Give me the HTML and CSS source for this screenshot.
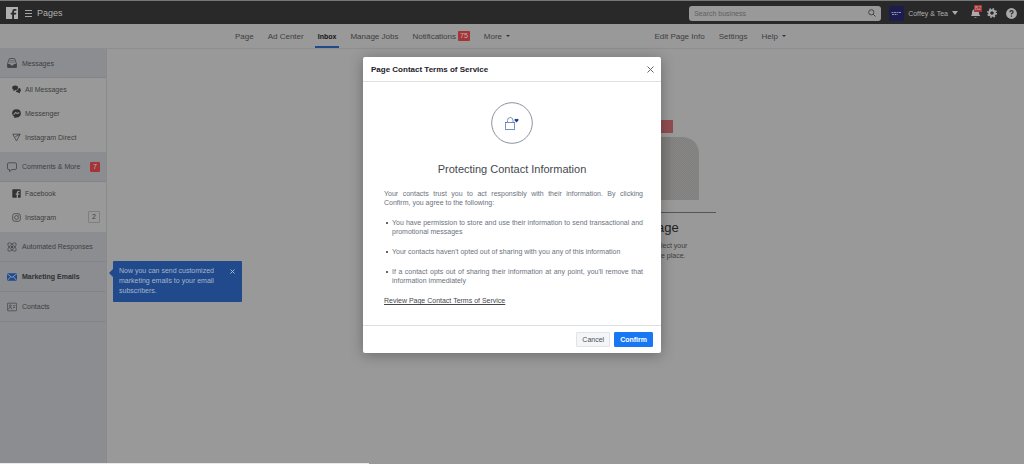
FILE: index.html
```html
<!DOCTYPE html>
<html lang="en">
<head>
<meta charset="utf-8">
<meta name="viewport" content="width=device-width, initial-scale=1">
<title>Pages</title>
<link rel="stylesheet" href="styles.css">
</head>
<body>
<div class="app">
  <header class="topbar">
    <svg class="logo" viewBox="0 0 12 12"><rect width="12" height="12" fill="#b0b0b0"/><path d="M8 12V7.500h2L10.300 5.800H8V4.600Q8 3.700 9 3.700H10.400V2H8.700Q6.200 2 6.200 4.400V5.800H4.700V7.500H6.200V12Z" fill="#282828"/></svg>
    <button class="bare menu-btn" aria-label="Menu"><svg width="7" height="8" viewBox="0 0 7 8"><path d="M0 1.500h7M0 4.500h7M0 7.500h7" stroke="#a5a5a5"/></svg></button>
    <span class="brand">Pages</span>
    <form class="search">
      <input class="search-input" type="text" placeholder="Search business" aria-label="Search business">
      <svg width="8" height="8" viewBox="0 0 8 8" fill="none" stroke="#444"><circle cx="3.300" cy="3.300" r="2.600"/><path d="M5.200 5.200 7.500 7.500"/></svg>
    </form>
    <button class="bare account">
      <svg width="15" height="15" viewBox="0 0 15 15"><rect width="15" height="15" fill="#1d1c4e"/><path d="M2.500 6.500H12.500M3 8.500H8.500" stroke="#9290ad" stroke-dasharray="2 .5"/></svg>
      <span>Coffey &amp; Tea</span>
      <svg width="6" height="4" viewBox="0 0 6 4"><path d="M0 0H6L3 4Z" fill="#aaa"/></svg>
    </button>
    <button class="bare bell" aria-label="Alerts">
      <svg width="11" height="10" viewBox="0 0 11 10"><path d="M1 8Q2 7 2 5Q2 1 5.500 1Q9 1 9 5Q9 7 10.500 8ZM4 9H7Q5.500 10.500 4 9Z" fill="#aaa"/></svg>
      <span class="bell-count">82</span>
    </button>
    <button class="bare" aria-label="Options"><svg width="10" height="10" viewBox="0 0 10 10" fill="none" stroke="#aaa"><circle cx="5" cy="5" r="2.800" stroke-width="2"/><circle cx="5" cy="5" r="4.200" stroke-width="1.600" stroke-dasharray="1.650 1.650"/></svg></button>
    <button class="bare help-btn" aria-label="Help"><svg width="11" height="11" viewBox="0 0 11 11"><circle cx="5.500" cy="5.500" r="5.400" fill="#aaa"/><path d="M3.900 4.300Q3.900 2.700 5.500 2.700Q7.100 2.700 7.100 4.100Q7.100 5 5.500 5.800V6.600M5.500 7.500V8.800" fill="none" stroke="#292929" stroke-width="1.200"/></svg></button>
  </header>

  <nav class="tabs">
    <a class="tab" href="#">Page</a>
    <a class="tab" href="#">Ad Center</a>
    <a class="tab active" href="#">Inbox</a>
    <a class="tab" href="#">Manage Jobs</a>
    <a class="tab" href="#">Notifications <span class="badge">75</span></a>
    <a class="tab" href="#">More <i class="caret"></i></a>
    <span class="spacer"></span>
    <a class="tab" href="#">Edit Page Info</a>
    <a class="tab" href="#">Settings</a>
    <a class="tab" href="#">Help <i class="caret"></i></a>
  </nav>

  <div class="body">
    <aside class="sidebar">
      <a class="group" href="#"><svg class="ico" viewBox="0 0 10 10"><path d="M.5 6 2 1.500Q2.200.5 3 .5H7Q7.800.5 8 1.500L9.500 6V9Q9.500 9.500 9 9.500H1Q.5 9.500.5 9Z" fill="none" stroke="#414345" stroke-width=".8"/><path d="M.5 6H3Q3.300 7.500 5 7.500Q6.700 7.500 7 6H9.500V9.500H.5Z" fill="#414345"/><path d="M2.500 2.500H7.500M2.200 4.200H7.800" stroke="#5b5d5f" stroke-width=".6"/></svg>Messages</a>
      <div class="sub">
        <a class="item" href="#"><svg class="ico-s" viewBox="0 0 9 9" fill="#303234"><path d="M3.200.5Q6 .5 6 2.700Q6 5 3.300 5L1.500 6.200V4.800Q.2 4.200.2 2.800Q.2.500 3.200.5Z"/><path d="M6.600 2.800Q8.900 3.200 8.900 5.200Q8.900 6.400 7.900 7V8.600L6.300 7.400Q4 7.500 3.500 5.700Q6.800 5.500 6.600 2.800Z"/></svg>All Messages</a>
        <a class="item" href="#"><svg class="ico-s" viewBox="0 0 9 9"><path d="M4.500.2Q8.900.4 8.900 4.300Q8.800 8.400 4.500 8.500L2.200 9V7.600Q.1 6.500.1 4.300Q.2.400 4.500.2Z" fill="#303234"/><path d="M1.700 5.600 3.700 3.400 5.300 4.700 7.300 3.500" fill="none" stroke="#999" stroke-width="1.100"/></svg>Messenger</a>
        <a class="item" href="#"><svg class="ico-s" viewBox="0 0 9 9" fill="none" stroke="#414345" stroke-width=".8"><path d="M.8 1.200H8.200L4.500 8ZM3.300 3.700 8.200 1.200"/></svg>Instagram Direct</a>
      </div>
      <a class="group" href="#"><svg class="ico" viewBox="0 0 10 10" fill="none" stroke="#414345" stroke-width=".8"><path d="M1.800.8H8.200Q9.500.8 9.500 2V6.300Q9.500 7.500 8.200 7.500H5L2.500 9.500V7.500H1.800Q.5 7.500.5 6.300V2Q.5.800 1.800.8Z"/></svg>Comments &amp; More<span class="badge end">7</span></a>
      <div class="sub">
        <a class="item" href="#"><svg class="ico-s" viewBox="0 0 9 9"><rect x=".3" y=".3" width="8.400" height="8.400" rx=".6" fill="#303234"/><path d="M6 9V5.800H7.400V4.500H6V3.600Q6 2.900 7.500 3V1.700Q4.700 1.300 4.700 3.600V4.500H3.700V5.800H4.700V9Z" fill="#999"/></svg>Facebook</a>
        <a class="item" href="#"><svg class="ico-s" viewBox="0 0 9 9" fill="none" stroke="#414345" stroke-width=".8"><rect x=".7" y=".7" width="7.600" height="7.600" rx="2"/><circle cx="4.500" cy="4.500" r="1.900"/><path d="M6.300 2.300H7"/></svg>Instagram<span class="count">2</span></a>
      </div>
      <a class="group" href="#"><svg class="ico" viewBox="0 0 10 10" fill="none" stroke="#414345" stroke-width=".7"><ellipse cx="5" cy="5" rx="5.400" ry="2.300" transform="rotate(45 5 5)"/><ellipse cx="5" cy="5" rx="5.400" ry="2.300" transform="rotate(-45 5 5)"/><circle cx="5" cy="5" r="1" fill="#414345"/></svg>Automated Responses</a>
      <a class="group strong" href="#"><svg class="ico" viewBox="0 0 10 10"><rect y="1.200" width="10" height="7.600" rx="1" fill="#204a8c"/><path d="M.3 1.900 5 5.500 9.700 1.900M.5 8.300 3.500 4.800M9.500 8.300 6.500 4.800" fill="none" stroke="#a4acb8" stroke-width=".8"/></svg>Marketing Emails</a>
      <a class="group" href="#"><svg class="ico" viewBox="0 0 10 10" fill="none" stroke="#414345" stroke-width=".7"><rect x=".4" y="1.200" width="9.200" height="7.600" rx=".7"/><circle cx="3.300" cy="3.800" r="1"/><path d="M1.500 7.300Q1.700 5.500 3.300 5.500Q4.900 5.500 5.100 7.300M6 3.700H8.500M6 5.500H8"/></svg>Contacts</a>
      <div class="tip" role="status">
        <p class="tip-text">Now you can send customized marketing emails to your email subscribers.</p>
        <button class="bare tip-close" aria-label="Dismiss"><svg width="5" height="5" viewBox="0 0 5 5"><path d="M.5.500 4.500 4.500M4.500.500.5 4.500" stroke="#a9b5ca"/></svg></button>
      </div>
    </aside>
    <main class="content">
      <div class="empty">
        <svg class="art" viewBox="0 0 76 94"><defs><pattern id="dots" width="2" height="2" patternUnits="userSpaceOnUse"><rect width="1" height="1" fill="#888"/><rect x="1" y="1" width="1" height="1" fill="#888"/></pattern></defs><rect x="0" y="0" width="33" height="13" fill="#904d50"/><path d="M0 17H40Q59 17 59 36V80H0Z" fill="#7f7e7d"/><path d="M30 17H40Q59 17 59 36V80H30Z" fill="url(#dots)"/><path d="M0 92.500H76" stroke="#555"/></svg>
        <h2 class="empty-title">age</h2>
        <p class="empty-text">lect your<br>e place.</p>
      </div>
    </main>
  </div>
  <div class="status"></div>
</div>

<div class="layer">
  <section class="modal" role="dialog" aria-labelledby="dlg-title">
    <header class="modal-head">
      <h1 class="modal-title" id="dlg-title">Page Contact Terms of Service</h1>
      <button class="bare" aria-label="Close"><svg width="7" height="7" viewBox="0 0 7 7"><path d="M.5.500 6.500 6.500M6.500.500.5 6.500" stroke="#606468"/></svg></button>
    </header>
    <div class="modal-body">
      <svg class="lock" viewBox="0 0 42 42" fill="none"><circle cx="21" cy="21" r="20.300" stroke="#8d939f"/><rect x="14.500" y="20.500" width="9" height="7" rx="1" stroke="#8090ab"/><path d="M16.500 20V18.500Q16.500 15.500 19.300 15.500Q22 15.500 22 18.500V20" stroke="#8090ab"/><path d="M14 20.500H16M22 20.500H24M14 27.500H15.500M22.500 27.500H24" stroke="#378af5"/><path d="M25.500 20.600 23.600 18.500Q23.100 16.800 24.500 16.700Q25.300 16.700 25.500 17.300Q25.800 16.700 26.600 16.700Q28 16.900 27.400 18.500Z" fill="#1c3f91"/></svg>
      <h2 class="modal-heading">Protecting Contact Information</h2>
      <div class="terms">
        <p>Your contacts trust you to act responsibly with their information. By clicking Confirm, you agree to the following:</p>
        <ul class="rules">
          <li>You have permission to store and use their information to send transactional and promotional messages</li>
          <li>Your contacts haven't opted out of sharing with you any of this information</li>
          <li>If a contact opts out of sharing their information at any point, you'll remove that information immediately</li>
        </ul>
        <a class="review" href="#">Review Page Contact Terms of Service</a>
      </div>
    </div>
    <footer class="modal-foot">
      <button class="btn">Cancel</button>
      <button class="btn primary">Confirm</button>
    </footer>
  </section>
</div>
</body>
</html>
```
FILE: styles.css
```css
* { box-sizing: border-box; }
body { margin: 0; font: 7px/9px "Liberation Sans", Arial, sans-serif; color: #3c3e40; background: #999; }
h1, h2, p, ul { margin: 0; padding: 0; }
a { color: inherit; text-decoration: none; }
svg { display: block; flex: none; }
button, input { font: inherit; color: inherit; }
.bare { border: 0; padding: 0; background: none; display: flex; align-items: center; }

.app { display: flex; flex-direction: column; min-height: 100vh; }
.topbar { display: flex; align-items: center; height: 24px; padding: 1px 7px 0 6px; background: #292929; border-top: 1px solid #777; color: #b0b0b0; }
.logo { width: 12px; height: 12px; }
.menu-btn { margin-left: 7px; }
.brand { margin: 0 auto 0 5px; font-size: 9px; }
.search { display: flex; align-items: center; width: 192px; height: 15px; margin-right: 8px; padding: 0 5px; background: #999; border-radius: 3px; }
.search-input { flex: 1; min-width: 0; border: 0; padding: 0; background: none; outline: 0; }
.search-input::placeholder { color: #606060; opacity: 1; }
.account { gap: 4px; margin-right: 12px; }
.bell { position: relative; margin-right: 6px; }
.bell-count { position: absolute; top: -3px; left: 4px; width: 8px; background: #a33539; color: #c4a0a0; font-size: 6px; line-height: 7px; text-align: center; }
.help-btn { margin-left: 9px; }

.tabs { display: flex; gap: 8px; height: 25px; padding: 0 235px 0 232px; border-bottom: 1px solid #8e8e8e; }
.tab { display: flex; align-items: center; gap: 2px; padding: 0 3px; font-size: 8px; white-space: nowrap; }
.active { font-size: 7px; font-weight: bold; color: #151515; box-shadow: inset 0 -2px #204a8c; }
.spacer { flex: 1; }
.badge { padding: 0 2px; background: #a33539; color: #c9b0b0; border-radius: 1px; font-size: 7px; line-height: 10px; }
.caret { margin-left: 2px; border: 2px solid transparent; border-top-color: #333; border-bottom: 0; }

.body { display: flex; flex: 1; }
.sidebar { position: relative; width: 107px; background: #8b8d90; border-right: 1px solid #8a8a8a; }
.group { display: flex; align-items: center; gap: 5px; height: 30px; padding: 0 6px 0 7px; border-bottom: 1px solid #828487; white-space: nowrap; }
.group:first-child { height: 29px; }
.strong { font-weight: bold; color: #2e3032; }
.ico { width: 10px; height: 10px; }
.ico-s { width: 9px; height: 9px; }
.sub { display: grid; gap: 2px; padding-bottom: 4px; background: #999; }
.item { display: flex; align-items: center; gap: 4px; height: 22px; padding: 0 6px 0 12px; }
.end { margin-left: auto; padding: 0 3px; }
.count { margin-left: auto; padding: 0 3px; border: 1px solid #7f7f7f; border-radius: 1px; line-height: 10px; }
.tip { position: absolute; left: 113px; top: 212px; width: 129px; display: flex; align-items: flex-start; gap: 12px; padding: 5px 7px 6px 6px; background: #204a8c; color: #a9b5ca; border-radius: 1px; line-height: 10px; }
.tip::before { content: ""; position: absolute; left: -4px; top: 8px; border: 4px solid transparent; border-right-color: #204a8c; border-left: 0; }
.tip-text { flex: 1; }
.tip-close { margin-top: 3px; }
.content { flex: 1; padding: 71px 308px 0 0; }
.empty { width: 76px; margin-left: auto; }
.art { width: 76px; height: 94px; }
.empty-title { margin-top: 6px; padding-left: 17px; font-size: 13px; font-weight: normal; line-height: 16px; color: #222; }
.empty-text { padding: 5px 0 0 21px; line-height: 10px; }
.status { position: absolute; left: 0; bottom: 0; width: 36%; height: 1px; background: #e8e8e8; }

.layer { position: absolute; inset: 0; display: flex; justify-content: center; align-items: flex-start; padding-top: 57px; }
.modal { width: 298px; background: #fff; border-radius: 2px; box-shadow: 0 2px 14px rgba(0, 0, 0, .3); }
.modal-head { display: flex; align-items: center; justify-content: space-between; height: 25px; padding: 0 7px 0 8px; border-bottom: 1px solid #dddfe2; }
.modal-title { font-size: 8px; color: #1d2129; }
.modal-body { display: flex; flex-direction: column; align-items: center; padding: 20px 18px 20px; }
.lock { width: 42px; height: 42px; }
.modal-heading { margin-top: 18px; font-size: 11px; font-weight: normal; line-height: 14px; color: #44484d; }
.terms { margin-top: 13px; padding-left: 3px; color: #6b727e; text-align: justify; }
.rules { margin: 11px 0; display: grid; gap: 11px; list-style: none; }
.rules li { display: grid; grid-template-columns: 8px 1fr; }
.rules li::before { content: ""; width: 2px; height: 2px; margin: 4px 0 0 2px; border-radius: 1px; background: #303338; }
.review { color: #44484d; text-decoration: underline; }
.modal-foot { display: flex; justify-content: flex-end; gap: 4px; padding: 6px 8px; border-top: 1px solid #dddfe2; }
.btn { height: 15px; padding: 0 5px; border: 1px solid #e1e3e6; border-radius: 1px; background: #f4f5f7; color: #4b4f56; }
.primary { border-color: #1877f2; background: #1877f2; color: #fff; font-weight: bold; }
```
